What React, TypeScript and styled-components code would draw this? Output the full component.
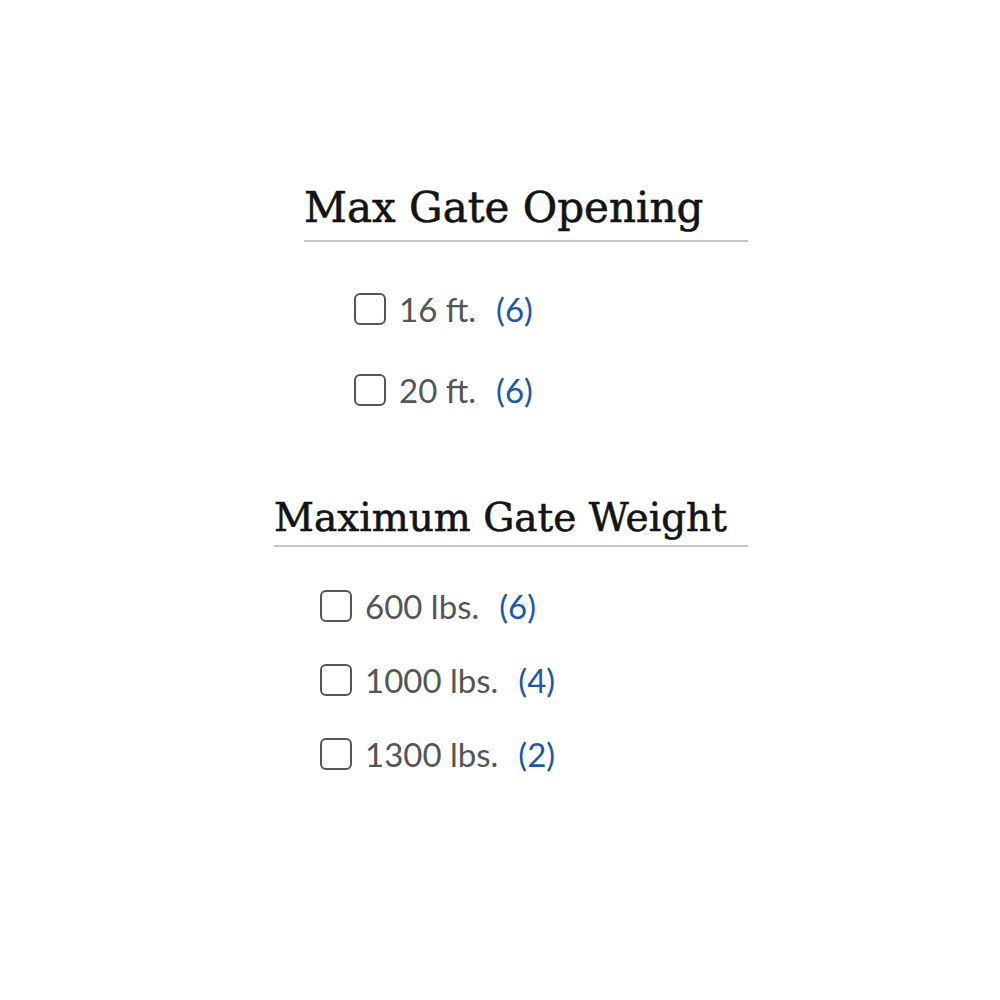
import React from "react";
import styled, { createGlobalStyle } from "styled-components";

const GlobalStyle = createGlobalStyle`
  html, body {
    margin: 0;
    padding: 0;
    background: #ffffff;
  }
`;

const Page = styled.div`
  width: 1000px;
  height: 1000px;
  display: flex;
  flex-direction: column;
  align-items: flex-end;
  padding-top: 180px;
  padding-right: 252px;
  box-sizing: border-box;
`;

const Section = styled.section<{ width: number; gap: number }>`
  width: ${({ width }) => width}px;
  display: flex;
  flex-direction: column;
  margin-bottom: ${({ gap }) => gap}px;
`;

const Title = styled.h2<{ size: number; lh: number; pad: number }>`
  margin: 0;
  padding-bottom: ${({ pad }) => pad}px;
  border-bottom: 2px solid #c4c4c4;
  font-family: "DejaVu Serif", serif;
  font-weight: 400;
  font-size: ${({ size }) => size}px;
  line-height: ${({ lh }) => lh}px;
  white-space: nowrap;
  color: #141414;
  -webkit-text-stroke: 0.6px #141414;
`;

const List = styled.ul<{ indent: number; rowGap: number; top: number }>`
  list-style: none;
  margin: ${({ top }) => top}px 0 0;
  padding: 0 0 0 ${({ indent }) => indent}px;
  display: flex;
  flex-direction: column;
  gap: ${({ rowGap }) => rowGap}px;
`;

const Row = styled.li`
  display: flex;
  align-items: center;
  height: 42px;
`;

const Box = styled.span`
  width: 28px;
  height: 28px;
  border: 2.5px solid #555555;
  border-radius: 6px;
  flex-shrink: 0;
  margin-right: 13px;
`;

const Label = styled.span`
  font-family: Lato, sans-serif;
  font-size: 33px;
  color: #555555;
`;

const Count = styled.span`
  font-family: Lato, sans-serif;
  font-size: 33px;
  color: #1b58a6;
  margin-left: 20px;
`;

type Option = { label: string; count: number };

const sections: {
  title: string;
  size: number;
  lh: number;
  pad: number;
  width: number;
  indent: number;
  rowGap: number;
  top: number;
  gap: number;
  options: Option[];
}[] = [
  {
    title: "Max Gate Opening",
    size: 42,
    lh: 56,
    pad: 4,
    width: 444,
    indent: 50,
    rowGap: 39,
    top: 46,
    gap: 82,
    options: [
      { label: "16 ft.", count: 6 },
      { label: "20 ft.", count: 6 },
    ],
  },
  {
    title: "Maximum Gate Weight",
    size: 39,
    lh: 50,
    pad: 2,
    width: 474,
    indent: 46,
    rowGap: 32,
    top: 38,
    gap: 0,
    options: [
      { label: "600 lbs.", count: 6 },
      { label: "1000 lbs.", count: 4 },
      { label: "1300 lbs.", count: 2 },
    ],
  },
];

export default function App() {
  return (
    <>
      <GlobalStyle />
      <Page>
        {sections.map((s) => (
          <Section key={s.title} width={s.width} gap={s.gap}>
            <Title size={s.size} lh={s.lh} pad={s.pad}>
              {s.title}
            </Title>
            <List indent={s.indent} rowGap={s.rowGap} top={s.top}>
              {s.options.map((o) => (
                <Row key={o.label}>
                  <Box />
                  <Label>{o.label}</Label>
                  <Count>({o.count})</Count>
                </Row>
              ))}
            </List>
          </Section>
        ))}
      </Page>
    </>
  );
}
